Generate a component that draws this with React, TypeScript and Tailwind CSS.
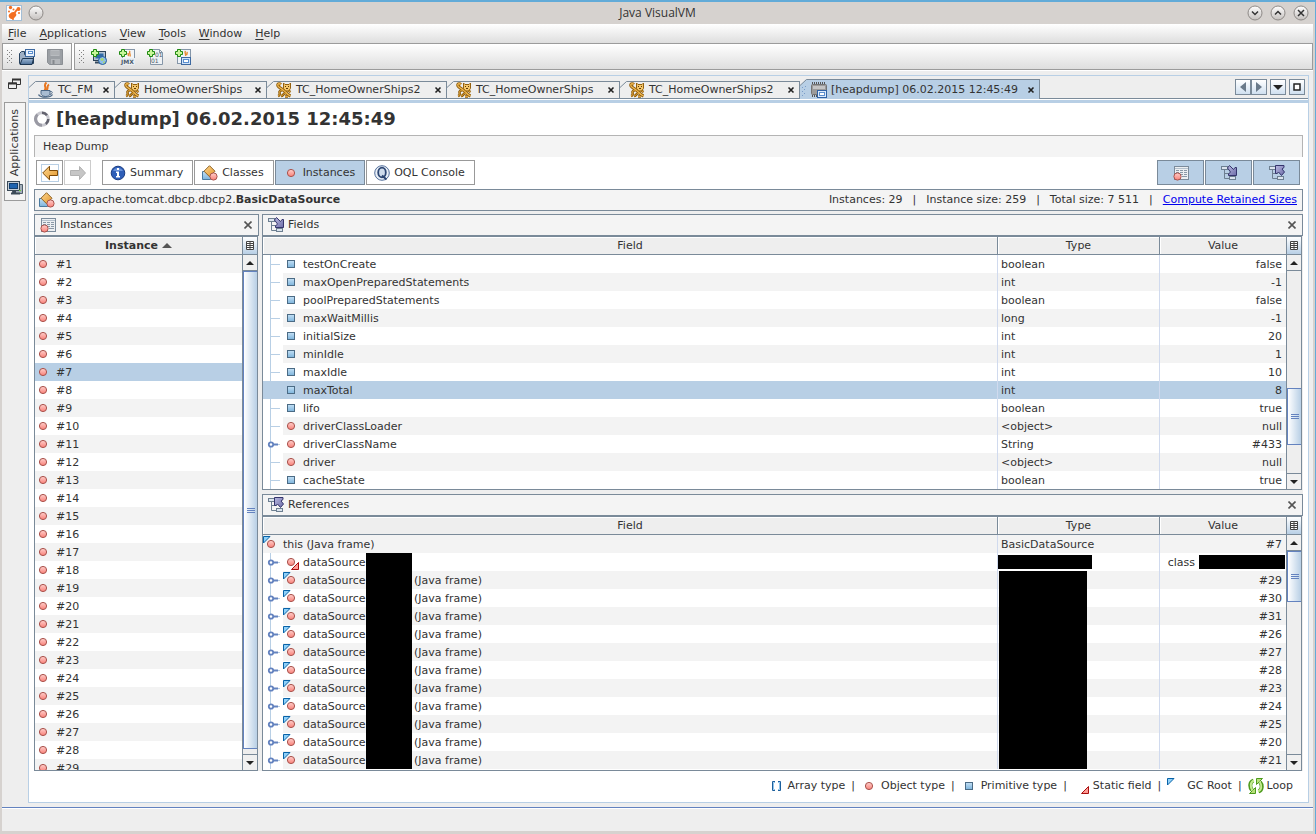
import type { ReactNode } from 'react';
import { useState } from 'react';
import { clsx } from 'clsx';

type NodeKind = 'primitive' | 'object' | 'static' | 'root';

interface FieldRow {
  name: string;
  type: string;
  value: string;
  kind: NodeKind;
  expandable?: boolean;
}

const menus = ['File', 'Applications', 'View', 'Tools', 'Window', 'Help'];

const fields: FieldRow[] = [
  { name: 'testOnCreate', type: 'boolean', value: 'false', kind: 'primitive' },
  { name: 'maxOpenPreparedStatements', type: 'int', value: '-1', kind: 'primitive' },
  { name: 'poolPreparedStatements', type: 'boolean', value: 'false', kind: 'primitive' },
  { name: 'maxWaitMillis', type: 'long', value: '-1', kind: 'primitive' },
  { name: 'initialSize', type: 'int', value: '20', kind: 'primitive' },
  { name: 'minIdle', type: 'int', value: '1', kind: 'primitive' },
  { name: 'maxIdle', type: 'int', value: '10', kind: 'primitive' },
  { name: 'maxTotal', type: 'int', value: '8', kind: 'primitive' },
  { name: 'lifo', type: 'boolean', value: 'true', kind: 'primitive' },
  { name: 'driverClassLoader', type: '<object>', value: 'null', kind: 'object' },
  { name: 'driverClassName', type: 'String', value: '#433', kind: 'object', expandable: true },
  { name: 'driver', type: '<object>', value: 'null', kind: 'object' },
  { name: 'cacheState', type: 'boolean', value: 'true', kind: 'primitive' },
];

const frameRefs = ['#29', '#30', '#31', '#26', '#27', '#28', '#23', '#24', '#25', '#20', '#21'];
const instances = Array.from({ length: 29 }, (_, i) => `#${i + 1}`);

/* ---------- icons ---------- */

function Icon({ children }: { children: ReactNode }) {
  return (
    <svg width="16" height="16" viewBox="0 0 16 16" fill="none" className="shrink-0" aria-hidden="true">
      {children}
    </svg>
  );
}

function Gradients() {
  return (
    <svg width="0" height="0" className="absolute" aria-hidden="true">
      <defs>
        <linearGradient id="red" x1="0" y1="0" x2="0" y2="1">
          <stop offset="0" stopColor="#ffd0cc" />
          <stop offset="1" stopColor="#f98078" />
        </linearGradient>
        <linearGradient id="blue" x1="0" y1="0" x2="0" y2="1">
          <stop offset="0" stopColor="#c4e0f5" />
          <stop offset="1" stopColor="#7db4dc" />
        </linearGradient>
        <linearGradient id="gold" x1="0" y1="0" x2="1" y2="1">
          <stop offset="0" stopColor="#ffd890" />
          <stop offset="1" stopColor="#e0952c" />
        </linearGradient>
        <linearGradient id="knob" x1="0" y1="0" x2="0" y2="1">
          <stop offset="0" stopColor="#ffffff" />
          <stop offset="1" stopColor="#c4c0bd" />
        </linearGradient>
        <linearGradient id="navy" x1="0" y1="0" x2="1" y2="1">
          <stop offset="0" stopColor="#b9b9e0" />
          <stop offset="1" stopColor="#6c6ca8" />
        </linearGradient>
        <linearGradient id="steel" x1="0" y1="0" x2="0" y2="1">
          <stop offset="0" stopColor="#9db8d4" />
          <stop offset="1" stopColor="#4d6f98" />
        </linearGradient>
      </defs>
    </svg>
  );
}

function Dot({ cx = 8, cy = 8 }: { cx?: number; cy?: number }) {
  return <circle cx={cx} cy={cy} r="3.6" fill="url(#red)" stroke="#a8524c" />;
}

function RootMark() {
  return <path d="M.5.5H7L.5 7Z" fill="#8fd0f8" stroke="#0863a8" />;
}

function StaticMark() {
  return <path d="M15.5 8.5V15.5H8.5Z" fill="#ff9a94" stroke="#a80f0f" />;
}

function KindIcon({ kind }: { kind: NodeKind }) {
  return (
    <Icon>
      {kind === 'primitive' && <rect x="4.5" y="4.5" width="7" height="7" fill="url(#blue)" stroke="#4b6b85" />}
      {kind !== 'primitive' && <Dot />}
      {kind === 'root' && <RootMark />}
      {kind === 'static' && <StaticMark />}
    </Icon>
  );
}

function Plus() {
  return <path d="M2.5.5h3v2h2v3h-2v2h-3v-2h-2v-3h2Z" fill="#c8f59a" stroke="#1f8a12" />;
}

function AppIcon() {
  return (
    <Icon>
      <rect x=".5" y=".5" width="15" height="15" fill="#fff" stroke="#a3bed6" />
      <path d="M3.500 9c2-1.500 3-2.500 5-1.500 2 1 2.500 2.500 1 4s-2 3-4 2.500-4-3-2-5Z" fill="#f36f21" />
      <path d="M8.500 8 11 4.500" stroke="#f36f21" strokeWidth="2" />
      <circle cx="12.500" cy="4" r="2" fill="#f36f21" />
      <circle cx="4.500" cy="2.500" r="1.700" fill="#f36f21" />
      <circle cx="7.500" cy="4.500" r="1" fill="#f36f21" />
      <circle cx="3" cy="6.500" r="1" fill="#f36f21" />
      <circle cx="13" cy="8" r="1" fill="#f36f21" />
      <circle cx="7" cy="14" r="1" fill="#f36f21" />
    </Icon>
  );
}

function OpenIcon() {
  return (
    <Icon>
      <path d="M.500 14.500V4.500l2-2h3v3h9v9Z" fill="#9fb0c4" stroke="#27425f" />
      <rect x="6.500" y=".500" width="9" height="7" fill="#e8f0fa" stroke="#3e69a0" />
      <rect x="9.500" y="2.500" width="4" height="2" fill="#fff" stroke="#5a8fd0" />
      <path d="M1 15.500 3.500 9.500h11l-1.500 6Z" fill="url(#steel)" stroke="#1d3652" />
    </Icon>
  );
}

function SaveIcon() {
  return (
    <Icon>
      <path d="M.500.500h15v15h-13l-2-2Z" fill="#9b9fa4" stroke="#8b8f94" />
      <rect x="3.500" y="1" width="9" height="6" fill="#b9bcc0" />
      <path d="M4 3h8M4 5h8" stroke="#a3a6aa" />
      <rect x="4" y="10" width="9" height="5" fill="#b4b7bb" />
      <rect x="5.500" y="11" width="2" height="4" fill="#85898e" />
    </Icon>
  );
}

function HostIcon() {
  return (
    <Icon>
      <rect x="2.500" y="2.500" width="12" height="9" fill="#b4c4d4" stroke="#2d4358" />
      <rect x="4.500" y="4.500" width="8" height="5" fill="#2f6aa8" />
      <path d="M4 13.500h6" stroke="#34495e" strokeWidth="2" />
      <circle cx="11.500" cy="11.500" r="4" fill="#8cbcec" stroke="#235a94" />
      <path d="M9.500 9.500l2.500-.5 1 2-2 1-1.500-1ZM12 13l2-1-.5 2-1.500.5Z" fill="#a9d86a" />
      <Plus />
    </Icon>
  );
}

function JmxIcon() {
  return (
    <Icon>
      <rect x="3.500" y=".500" width="12" height="15" fill="#f3f5f8" stroke="#8596a8" />
      <path d="M11 2c-1.500 2 1 3 0 5.500M9 4c0 1 1 2 0 3" stroke="#e78a33" strokeWidth="1.400" />
      <rect x="2" y="9" width="14" height="7" fill="#e9edf2" />
      <text x="2" y="15" fontSize="6" fontWeight="bold" fontFamily="DejaVu Sans" fill="#4a5a6c">JMX</text>
      <Plus />
    </Icon>
  );
}

function CoreDumpIcon() {
  return (
    <Icon>
      <path d="M3.500.500h9l3 3v12h-12Z" fill="#eef1f4" stroke="#8596a8" />
      <path d="M12.500.500v3h3" stroke="#8596a8" />
      <text x="8" y="8" fontSize="6" fontFamily="DejaVu Sans" fill="#4a5a6c">01</text>
      <text x="4" y="14" fontSize="6" fontFamily="DejaVu Sans" fill="#4a5a6c">01</text>
      <Plus />
    </Icon>
  );
}

function SnapshotIcon() {
  return (
    <Icon>
      <rect x="2.500" y=".500" width="13" height="14" fill="#eef3f9" stroke="#8596a8" />
      <path d="M10.500 2c-1.500 2 1 3 0 5M12.500 3c-1 1 0 2-1 3" stroke="#e78a33" strokeWidth="1.400" />
      <rect x="6.500" y="8.500" width="9" height="7" fill="#cfe2f8" stroke="#3e69a0" />
      <rect x="8.500" y="10.500" width="5" height="3" fill="#fff" stroke="#5a8fd0" />
      <Plus />
    </Icon>
  );
}

function JavaIcon() {
  return (
    <Icon>
      <path d="M8.500.5C4.500 4 9.500 5 6.500 8.500M11 2.500C8 4.500 11 6 8.500 8.500" stroke="#e8761f" strokeWidth="2" />
      <path d="M3 8.500h9v3c0 2-2 3-4.500 3S3 13 3 11.500Z" fill="#a9bdd2" stroke="#4b6785" />
      <path d="M12 9.500c3-.5 3 2 0 3" stroke="#4b6785" />
      <path d="M.5 12.500c2 3.500 12 3.500 14 0" stroke="#4b6785" strokeWidth="1.400" />
    </Icon>
  );
}

function TomcatIcon() {
  const tail = 'M5 2.500C3 1 1 2 2 4s5 3 7 5.500 3 3.500 5.500 4.500';
  const legs = 'M2 14c2-.5 2-2 1.500-3.500S5 8 6.500 8.500M5 14c2.500 0 2-3 5-3M12 8.500l2.500 1.500M9 14.500h3';
  return (
    <Icon>
      <path d={tail} stroke="#8f5d0c" strokeWidth="3" />
      <path d={legs} stroke="#8f5d0c" strokeWidth="2.600" />
      <path d={tail} stroke="#f0b850" strokeWidth="1.300" />
      <path d={legs} stroke="#e0a43a" strokeWidth="1" />
      <path d="M7.500 1l1.500 1.500h4L14.500 1v5.500l-2 2.500h-3l-2-2.500Z" fill="#f4c66a" stroke="#94600c" />
      <path d="M9 4.500h1M12 4.500h1M10 6.500h2" stroke="#5e3b05" />
    </Icon>
  );
}

function HeapIcon() {
  return (
    <Icon>
      <path d="M1 1h14M1 14h6" stroke="#555" strokeWidth="2" strokeDasharray="1 1" />
      <rect x=".500" y="2.500" width="15" height="10" rx="1" fill="#9b9b9b" stroke="#747474" />
      <path d="M2 5.500h12" stroke="#c4c4c4" strokeWidth="3" />
      <rect x="6.500" y="8.500" width="9" height="7" fill="#dceafa" stroke="#2f62a5" />
      <rect x="8.500" y="10.500" width="5" height="3" fill="#fff" stroke="#5a8fd0" />
    </Icon>
  );
}

function SpinnerIcon() {
  return (
    <Icon>
      <circle cx="8" cy="8" r="6.300" stroke="#c9c9d0" strokeWidth="3" />
      <path d="M3.500 3.500A6.300 6.300 0 0 0 8 14.300" stroke="#9a9aa4" strokeWidth="3" />
      <path d="M8 1.700a6.300 6.300 0 0 1 5 2.500M14.300 8a6.300 6.300 0 0 1-2.500 5" stroke="#62626e" strokeWidth="2.500" />
    </Icon>
  );
}

function ArrowIcon({ forward }: { forward?: boolean }) {
  return forward ? (
    <Icon>
      <path d="M15.500 8 9.500 1.500V5.500H.500v5h9v4Z" fill="#c6c6c6" stroke="#b2b2b2" />
    </Icon>
  ) : (
    <Icon>
      <path d="M.700 8 7.500 1.200V5.500h8v5h-8v4.300Z" fill="url(#gold)" stroke="#7d4a08" />
    </Icon>
  );
}

function InfoIcon() {
  return (
    <Icon>
      <circle cx="8" cy="8" r="6.800" fill="#2f5fb8" stroke="#1b3d82" />
      <path d="M3 6a5.500 5 0 0 1 10 0Z" fill="#6c94da" />
      <path d="M7 3h2v2H7ZM6 6.500h3V11h1v1.500H6V11h1V8H6Z" fill="#fff" />
    </Icon>
  );
}

function ClassesIcon() {
  return (
    <Icon>
      <path d="M.500 6.500h8v8h-8Z" fill="url(#blue)" stroke="#4b7ba0" />
      <path d="M7.500.700 13 6.200l-5.500 5.500L2 6.200Z" fill="url(#gold)" stroke="#8f6426" />
      <Dot cx={11.5} cy={11.5} />
    </Icon>
  );
}

function OqlIcon() {
  return (
    <Icon>
      <circle cx="8" cy="8" r="7.300" fill="#eaf0f8" stroke="#54709c" />
      <ellipse cx="8" cy="7.500" rx="3.800" ry="4.800" fill="#cfdcec" stroke="#2c4673" strokeWidth="1.800" />
      <path d="M8 10.500l4.500 4" stroke="#2c4673" strokeWidth="2" />
    </Icon>
  );
}

function InstancesIcon() {
  return (
    <Icon>
      <rect x="1.500" y="1.500" width="14" height="13" fill="#eceff2" stroke="#7b8b9b" />
      <path d="M2 3.500h13" stroke="#b4c0cc" />
      <path d="M3 5.500h3M7 5.500h3M11 5.500h3M3 7.500h3M7 7.500h3M11 7.500h3M6 9.500h4M11 9.500h3M9 11.500h5" stroke="#8a98a6" />
      <Dot cx={4.5} cy={11.5} />
    </Icon>
  );
}

function TreeIcon({ up }: { up?: boolean }) {
  return (
    <Icon>
      <path d="M3.500 4v9.500H9M4 8.500h5" stroke="#6d7f91" />
      <rect x=".500" y="1.500" width="6" height="3" fill="#dbe4ee" stroke="#6d7f91" />
      <rect x="8.500" y="11.500" width="6" height="3" fill="#dbe4ee" stroke="#6d7f91" />
      {up ? (
        <path d="M6.500.500H15V2.500L13 4l2.500 3-3 3.500L9.500 7 8 8.500H6.500Z" fill="url(#navy)" stroke="#34346c" />
      ) : (
        <path d="M6.500 3 8.500.500l4 4L14 2.500h1.500v8H7.500V9L9.500 7Z" fill="url(#navy)" stroke="#34346c" />
      )}
    </Icon>
  );
}

function ComputerIcon() {
  return (
    <Icon>
      <path d="M5.500 4.500h10v9h-10Z" fill="#a4b0bb" stroke="#4f5d6a" />
      <rect x=".500" y="1.500" width="12" height="9" fill="#c4ced8" stroke="#3c4a57" />
      <rect x="2.500" y="3.500" width="8" height="5" fill="#2064b0" stroke="#143f70" />
      <path d="M4 13.500h9M6 11.500h3" stroke="#3c4a57" strokeWidth="2" />
      <path d="M12 10.500h2" stroke="#6fd03a" />
    </Icon>
  );
}

function LoopIcon() {
  return (
    <Icon>
      <path d="M5.500 2.500C1.500 4 1.500 9 4 12M10.500 13.500c4-1.500 4-6.500 1.500-9.500" stroke="#4c9a1c" strokeWidth="4" />
      <path d="M7.500 9.500v6h-6ZM8.500 6.500v-6h6Z" fill="#b7e07a" stroke="#4c9a1c" />
      <path d="M6 2.500C2 4 2 9 4.500 12.500M10 13.500c4-1.500 4-6.500 1.500-10" stroke="#c4ea90" strokeWidth="2" />
    </Icon>
  );
}

function ArrayIcon() {
  return (
    <Icon>
      <path d="M7 3.500H4.500v9H7M10 3.500h2.500v9H10" stroke="#1c5f9c" strokeWidth="1" />
      <path d="M7 4.500H5.500v7H7M10 4.500h1.500v7H10" stroke="#8fc4ec" />
    </Icon>
  );
}

function CloseGlyph({ bold }: { bold?: boolean }) {
  return (
    <svg width="8" height="8" viewBox="0 0 8 8" aria-hidden="true">
      <path
        d={bold ? 'M1.500 1.500l5 5M6.500 1.500l-5 5' : 'M.500.500l7 7M7.500.500l-7 7'}
        stroke={bold ? '#222' : '#555'}
        strokeWidth={1.6}
      />
    </svg>
  );
}

function Grip() {
  return (
    <svg width="6" height="14" className="shrink-0" shapeRendering="crispEdges" aria-hidden="true">
      <path d="M0 .5h1M4 .5h1M2 2.500h1M0 4.500h1M4 4.500h1M2 6.500h1M0 8.500h1M4 8.500h1M2 10.500h1M0 12.500h1M4 12.500h1" stroke="#808080" />
    </svg>
  );
}

/* ---------- window chrome ---------- */

function Knob({ label, d }: { label: string; d: string }) {
  return (
    <button aria-label={label}>
      <Icon>
        <circle cx="8" cy="8" r="7" fill="url(#knob)" stroke="#8e8a87" />
        <path d={d} stroke="#333" strokeWidth="1.500" />
      </Icon>
    </button>
  );
}

function TitleBar() {
  return (
    <header className="flex h-[22px] shrink-0 items-center bg-[#d6d2cf] px-1">
      <div className="flex flex-1 items-center gap-1.5">
        <AppIcon />
        <Knob label="Pin" d="M7.500 8h1" />
      </div>
      <h1 className="font-['Open_Sans','Noto_Sans',sans-serif] text-[12px] leading-4">Java VisualVM</h1>
      <div className="flex flex-1 items-center justify-end gap-[7px]">
        <Knob label="Minimize" d="M5 6.500l3 3 3-3" />
        <Knob label="Maximize" d="M5 9.500l3-3 3 3" />
        <Knob label="Close window" d="M5 5l6 6M11 5l-6 6" />
      </div>
    </header>
  );
}

function MenuBar() {
  return (
    <nav className="flex h-[19px] shrink-0 items-center gap-[13px] bg-linear-to-b from-white to-[#dedede] px-1.5">
      {menus.map(m => (
        <button key={m}>
          <span className="underline underline-offset-2">{m[0]}</span>
          {m.slice(1)}
        </button>
      ))}
    </nav>
  );
}

function Toolbar() {
  const bar = 'flex h-[27px] items-center border border-[#9b9b9b] bg-linear-to-b from-white to-[#dedede]';
  return (
    <div className="flex shrink-0 gap-0.5 bg-white pb-px">
      <div className={clsx(bar, 'gap-3 pl-1 pr-2')}>
        <Grip />
        <button aria-label="Load" className="-ml-1.5"><OpenIcon /></button>
        <button aria-label="Save" disabled><SaveIcon /></button>
      </div>
      <div className={clsx(bar, 'flex-1 gap-3 pl-1')}>
        <Grip />
        <button aria-label="Add remote host" className="-ml-1.5"><HostIcon /></button>
        <button aria-label="Add JMX connection"><JmxIcon /></button>
        <button aria-label="Add core dump"><CoreDumpIcon /></button>
        <button aria-label="Add snapshot"><SnapshotIcon /></button>
      </div>
    </div>
  );
}

function SideBar() {
  return (
    <aside className="flex w-[26px] shrink-0 flex-col items-center pt-[3px]">
      <button aria-label="Restore group" className="mb-3">
        <svg width="14" height="12" viewBox="0 0 14 12" fill="none" aria-hidden="true">
          <path d="M4.500 1v5.500h8V1" stroke="#333" />
          <path d="M4 1.500h9" stroke="#333" strokeWidth="2" />
          <path d="M.500 5v5.500h8V5Z" fill="#eee" stroke="#333" />
          <path d="M0 5.500h9" stroke="#333" strokeWidth="2" />
        </svg>
      </button>
      <button className="flex w-[22px] flex-col items-center gap-1 border border-[#9b9b9b] bg-[#f4f4f4] pt-1.5 pb-1">
        <span className="rotate-180 [writing-mode:vertical-rl]">Applications</span>
        <ComputerIcon />
      </button>
    </aside>
  );
}

/* ---------- document tabs ---------- */

interface TabProps {
  icon: ReactNode;
  title: string;
  width: string;
  active?: boolean;
}

function Tab({ icon, title, width, active }: TabProps) {
  return (
    <div className={clsx('flex shrink-0', width, active ? 'h-[20px]' : 'h-[18px]')}>
      <svg width="7" height="20" className="h-full shrink-0" aria-hidden="true">
        <path d="M0 6.500 6.500 0H7V20H0Z" fill={active ? '#b8cfe5' : '#eee'} />
        <path d="M0 6.500 6.500.5H7" fill="none" stroke="#7a8a99" />
        {!active && <path d="M0 17.500h7" stroke="#7a8a99" />}
        {active && <path d="M2.500 8v1M4.500 10v1M2.500 12v1M4.500 14v1M2.500 16v1M5.500 7v1" stroke="#7a9cc8" />}
      </svg>
      <div
        className={clsx(
          'flex min-w-0 flex-1 items-center gap-1 border-t border-r border-[#7a8a99] pr-1',
          active ? 'bg-[#b8cfe5] pl-1' : 'border-b bg-[#eee] pl-0.5',
        )}
      >
        {icon}
        <button role="tab" aria-selected={!!active} className="whitespace-nowrap">{title}</button>
        <button aria-label={`Close ${title}`} className="ml-auto"><CloseGlyph bold /></button>
      </div>
    </div>
  );
}

function TabButton({ label, children }: { label: string; children: ReactNode }) {
  return (
    <button aria-label={label} className="flex size-4 items-center justify-center border border-[#7a8a99] bg-linear-to-b from-white to-[#d0e0f0]">
      {children}
    </button>
  );
}

function TabStrip() {
  return (
    <div className="shrink-0">
      <div className="relative z-10 flex h-[23px] items-end" role="tablist">
        <Tab icon={<JavaIcon />} title="TC_FM" width="w-[86px]" />
        <Tab icon={<TomcatIcon />} title="HomeOwnerShips" width="w-[152px]" />
        <Tab icon={<TomcatIcon />} title="TC_HomeOwnerShips2" width="w-[180px]" />
        <Tab icon={<TomcatIcon />} title="TC_HomeOwnerShips" width="w-[173px]" />
        <Tab icon={<TomcatIcon />} title="TC_HomeOwnerShips2" width="w-[180px]" />
        <Tab icon={<HeapIcon />} title="[heapdump] 06.02.2015 12:45:49" width="w-[240px]" active />
        <div className="flex h-full min-w-0 flex-1 items-start justify-end gap-[3px] border-b border-[#7a8a99] pt-[3px] pr-[3px]">
          <div className="flex">
            <TabButton label="Scroll left">
              <svg width="6" height="10"><path d="M6 0v10L0 5Z" fill="#6a7a8a" /></svg>
            </TabButton>
            <TabButton label="Scroll right">
              <svg width="6" height="10"><path d="M0 0v10l6-5Z" fill="#6a7a8a" /></svg>
            </TabButton>
          </div>
          <TabButton label="Show documents">
            <svg width="10" height="5"><path d="M0 0h10L5 5Z" fill="#222" /></svg>
          </TabButton>
          <TabButton label="Maximize document">
            <svg width="8" height="8"><rect x="1" y="1" width="6" height="6" fill="#fff" stroke="#222" strokeWidth="1.500" /></svg>
          </TabButton>
        </div>
      </div>
      <div className="h-1 border-t border-white bg-[#b8cfe5]" />
    </div>
  );
}

/* ---------- heap dump view ---------- */

interface ViewButtonProps {
  icon: ReactNode;
  label: string;
  active?: boolean;
  onClick: () => void;
}

function ViewButton({ icon, label, active, onClick }: ViewButtonProps) {
  return (
    <button
      onClick={onClick}
      className={clsx(
        'flex h-[25px] items-center gap-1 border pr-[9px] pl-[7px]',
        active ? 'border-[#7a8a99] bg-[#b8cfe5]' : 'border-[#999] bg-white',
      )}
    >
      {icon}
      {label}
    </button>
  );
}

function ViewBar() {
  const [view, setView] = useState('Instances');
  const views = [
    { label: 'Summary', icon: <InfoIcon /> },
    { label: 'Classes', icon: <ClassesIcon /> },
    { label: 'Instances', icon: <KindIcon kind="object" /> },
    { label: 'OQL Console', icon: <OqlIcon /> },
  ];
  const toggle = 'flex h-[25px] w-[47px] items-center justify-center border border-[#7a8a99] bg-[#b8cfe5]';
  return (
    <div className="flex shrink-0 items-center gap-px pt-[3px] pr-[3px] pb-1 pl-0.5">
      <button aria-label="Back" className="flex h-[25px] w-[27px] items-center justify-center border border-[#999]">
        <span className="border border-[#b8cfe5]"><ArrowIcon /></span>
      </button>
      <button aria-label="Forward" disabled className="mr-2.5 flex h-[25px] w-[27px] items-center justify-center border border-[#ccc]">
        <ArrowIcon forward />
      </button>
      {views.map(v => (
        <ViewButton key={v.label} icon={v.icon} label={v.label} active={view === v.label} onClick={() => setView(v.label)} />
      ))}
      <div className="ml-auto flex gap-px">
        <button aria-label="Show instances" className={toggle}><InstancesIcon /></button>
        <button aria-label="Show fields" className={toggle}><TreeIcon /></button>
        <button aria-label="Show references" className={toggle}><TreeIcon up /></button>
      </div>
    </div>
  );
}

function ClassBar() {
  return (
    <div className="flex h-[22px] shrink-0 items-center gap-[5px] border border-[#7a8a99] bg-[#f4f4f4] pr-[5px] pl-1">
      <ClassesIcon />
      <span>org.apache.tomcat.dbcp.dbcp2.<b>BasicDataSource</b></span>
      <div className="ml-auto flex gap-2.5">
        <span>Instances: 29</span>
        <span>|</span>
        <span>Instance size: 259</span>
        <span>|</span>
        <span>Total size: 7 511</span>
        <span>|</span>
        <a href="#retained" className="text-[#0000ee] underline">Compute Retained Sizes</a>
      </div>
    </div>
  );
}

function ScrollBar({ start, size }: { start: number; size: number }) {
  const cap = 'flex h-4 shrink-0 items-center justify-center bg-[#f0f0f0]';
  return (
    <div className="flex w-4 shrink-0 flex-col border-x border-[#7a8a99] bg-[#eee]">
      <button aria-label="Choose columns" className="flex h-[18px] shrink-0 items-center justify-center border-b border-[#7a8a99] bg-linear-to-b from-white to-[#b8cfe5]">
        <svg width="8" height="9" viewBox="0 0 8 9" aria-hidden="true">
          <path d="M.500.500h7v8h-7ZM4 0v9M0 2.500h8M0 4.500h8M0 6.500h8" fill="#fff" stroke="#444" />
        </svg>
      </button>
      <button aria-label="Scroll up" className={clsx(cap, 'border-b border-[#7a8a99]')}>
        <svg width="8" height="4"><path d="M0 4h8L4 0Z" fill="#222" /></svg>
      </button>
      <div className="min-h-0 flex-1">
        <div style={{ height: `${start}%` }} />
        <div
          className="flex flex-col items-center justify-center gap-px border-y border-l border-[#6382bf] bg-linear-to-r from-white to-[#b8cfe5]"
          style={{ height: `${size}%` }}
        >
          <div className="h-px w-2 bg-[#6382bf]" />
          <div className="h-px w-2 bg-[#6382bf]" />
          <div className="h-px w-2 bg-[#6382bf]" />
        </div>
      </div>
      <button aria-label="Scroll down" className={clsx(cap, 'border-t border-[#7a8a99]')}>
        <svg width="8" height="4"><path d="M0 0h8L4 4Z" fill="#222" /></svg>
      </button>
    </div>
  );
}

interface PanelProps {
  title: string;
  icon: ReactNode;
  scroll: { start: number; size: number };
  className: string;
  children: ReactNode;
}

function Panel({ title, icon, scroll, className, children }: PanelProps) {
  return (
    <section className={clsx('flex min-h-0 flex-col', className)}>
      <div className="flex h-[22px] shrink-0 items-center gap-1 border border-[#7a8a99] bg-[#f4f4f4] pr-1.5 pl-[5px]">
        {icon}
        <h3>{title}</h3>
        <button aria-label={`Close ${title}`} className="ml-auto"><CloseGlyph /></button>
      </div>
      <div className="mr-px flex min-h-0 flex-1 border-y border-l border-[#7a8a99] bg-white">
        <div className="min-w-0 flex-1 overflow-hidden">{children}</div>
        <ScrollBar start={scroll.start} size={scroll.size} />
      </div>
    </section>
  );
}

const th = 'h-[18px] border-b border-[#7a8a99] bg-[#eee] p-0 font-normal leading-4 shadow-[inset_1px_1px_0_#fff]';

function InstanceTable() {
  const [selected, setSelected] = useState('#7');
  return (
    <table className="w-full table-fixed border-separate border-spacing-0">
      <thead>
        <tr>
          <th className={th}>
            <span className="inline-flex items-center gap-1 font-bold">
              Instance
              <svg width="10" height="5"><path d="M0 5h10L5 0Z" fill="#555" /></svg>
            </span>
          </th>
        </tr>
      </thead>
      <tbody>
        {instances.map((id, i) => (
          <tr
            key={id}
            onClick={() => setSelected(id)}
            className={selected === id ? 'bg-[#b8cfe5]' : i % 2 === 0 ? 'bg-[#f3f3f3]' : 'bg-white'}
          >
            <td className="h-[18px] p-0">
              <div className="flex h-[18px] items-center gap-[5px]">
                <KindIcon kind="object" />
                <span className="pt-px leading-[17px]">{id}</span>
              </div>
            </td>
          </tr>
        ))}
      </tbody>
    </table>
  );
}

function TreeGuide({ expandable, plain }: { expandable?: boolean; plain: boolean }) {
  return (
    <svg width="20" height="18" className={clsx('shrink-0', plain && 'bg-white')} aria-hidden="true">
      <path d="M7.500 0v18M8 9.500h9" stroke="#b8cfe5" />
      {expandable && (
        <>
          <path d="M10 9.500h5" stroke="#6382bf" strokeWidth="2" />
          <circle cx="8" cy="9.500" r="2.200" fill="#fff" stroke="#6382bf" strokeWidth="1.800" />
        </>
      )}
    </svg>
  );
}

function TreeTable({ children }: { children: ReactNode }) {
  return (
    <table className="w-full table-fixed border-separate border-spacing-0">
      <colgroup>
        <col />
        <col className="w-[162px]" />
        <col className="w-[126px]" />
      </colgroup>
      <thead>
        <tr>
          <th className={clsx(th, 'border-r')}>Field</th>
          <th className={clsx(th, 'border-r')}>Type</th>
          <th className={th}>Value</th>
        </tr>
      </thead>
      <tbody>{children}</tbody>
    </table>
  );
}

interface TreeRowProps {
  kind: NodeKind;
  label: ReactNode;
  type: ReactNode;
  value: ReactNode;
  striped: boolean;
  selected?: boolean;
  expandable?: boolean;
  top?: boolean;
  onClick?: () => void;
}

function TreeRow({ kind, label, type, value, striped, selected, expandable, top, onClick }: TreeRowProps) {
  return (
    <tr onClick={onClick} className={selected ? 'bg-[#b8cfe5]' : striped ? 'bg-[#f3f3f3]' : 'bg-white'}>
      <td className="h-[18px] border-r border-[#d0daee] p-0">
        <div className="flex h-[18px] items-center overflow-hidden whitespace-nowrap">
          {!top && <TreeGuide expandable={expandable} plain={!selected} />}
          <KindIcon kind={kind} />
          <div className="flex items-center pl-1">{label}</div>
        </div>
      </td>
      <td className="h-[18px] border-r border-[#d0daee] p-0">{type}</td>
      <td className="h-[18px] p-0">{value}</td>
    </tr>
  );
}

function NameText({ children }: { children: ReactNode }) {
  return <span className="pt-px leading-[17px]">{children}</span>;
}

function TypeText({ children }: { children: ReactNode }) {
  return <div className="pt-px pl-[3px] leading-[17px]">{children}</div>;
}

function ValueText({ children }: { children: ReactNode }) {
  return <div className="pt-px pr-1 text-right leading-[17px]">{children}</div>;
}

function FieldsTable() {
  const [selected, setSelected] = useState('maxTotal');
  return (
    <TreeTable>
      {fields.map((f, i) => (
        <TreeRow
          key={f.name}
          kind={f.kind}
          label={<NameText>{f.name}</NameText>}
          type={<TypeText>{f.type}</TypeText>}
          value={<ValueText>{f.value}</ValueText>}
          striped={i % 2 === 1}
          selected={selected === f.name}
          expandable={f.expandable}
          onClick={() => setSelected(f.name)}
        />
      ))}
    </TreeTable>
  );
}

function MaskedName({ suffix }: { suffix?: string }) {
  return (
    <>
      <span className="w-[63px] pt-px leading-[17px]">dataSource</span>
      <span className="h-[18px] w-[46px] bg-black" />
      {suffix && <span className="pt-px pl-0.5 leading-[17px]">{suffix}</span>}
    </>
  );
}

function ReferencesTable() {
  return (
    <TreeTable>
      <TreeRow
        kind="root"
        label={<NameText>this (Java frame)</NameText>}
        type={<TypeText>BasicDataSource</TypeText>}
        value={<ValueText>#7</ValueText>}
        striped
        top
      />
      <TreeRow
        kind="static"
        label={<MaskedName />}
        type={<div className="h-3.5 w-[94px] bg-black" />}
        value={
          <div className="flex items-center justify-end gap-1 pr-px">
            <NameText>class</NameText>
            <span className="h-3.5 w-[86px] bg-black" />
          </div>
        }
        striped={false}
        expandable
      />
      {frameRefs.map((ref, i) => (
        <TreeRow
          key={ref}
          kind="root"
          label={<MaskedName suffix="(Java frame)" />}
          type={<div className="ml-px h-[18px] w-[88px] bg-black" />}
          value={<ValueText>{ref}</ValueText>}
          striped={i % 2 === 0}
          expandable
        />
      ))}
    </TreeTable>
  );
}

function Legend() {
  return (
    <footer className="flex h-[31px] shrink-0 items-center justify-end pr-2.5 pb-0.5">
      <ArrayIcon />
      <span className="pl-1">Array type</span>
      <span className="px-1.5">|</span>
      <KindIcon kind="object" />
      <span className="pl-1">Object type</span>
      <span className="px-1.5">|</span>
      <KindIcon kind="primitive" />
      <span className="pl-1">Primitive type</span>
      <span className="px-1.5">|</span>
      <Icon><StaticMark /></Icon>
      <span className="pl-1">Static field</span>
      <span className="px-1.5">|</span>
      <Icon><RootMark /></Icon>
      <span className="pl-1">GC Root</span>
      <span className="px-1.5">|</span>
      <LoopIcon />
      <span className="pl-[3px]">Loop</span>
    </footer>
  );
}

export default function App() {
  return (
    <div className="flex h-screen flex-col border-t-2 border-r border-[#62abd8] font-['DejaVu_Sans',sans-serif] text-[11px] leading-[14px] text-[#333]">
      <Gradients />
      <div className="flex min-h-0 flex-1 flex-col border-r-2 border-b-[3px] border-l-2 border-[#d6d2cf] bg-[#eee]">
        <TitleBar />
        <MenuBar />
        <Toolbar />

        <div className="flex min-h-0 flex-1 pt-1 pr-1 pb-1">
          <SideBar />
          <main className="flex min-w-0 flex-1 flex-col border border-[#b8cfe5] bg-[#eee]">
            <TabStrip />
            <div className="flex min-h-0 flex-1 flex-col bg-white px-[5px]">
              <div className="flex h-8 shrink-0 items-center gap-1.5">
                <SpinnerIcon />
                <h2 className="text-[18px] font-bold">[heapdump] 06.02.2015 12:45:49</h2>
              </div>
              <div className="flex h-[22px] shrink-0 items-center border border-b-0 border-[#b4b4b4] bg-[#f4f4f4] px-2">Heap Dump</div>
              <ViewBar />
              <ClassBar />

              <div className="flex min-h-0 flex-1 gap-[3px] bg-[#eee] pt-[3px]">
                <Panel title="Instances" icon={<InstancesIcon />} scroll={{ start: 0, size: 99 }} className="w-[225px] shrink-0">
                  <InstanceTable />
                </Panel>
                <div className="flex min-w-0 flex-1 flex-col gap-1">
                  <Panel title="Fields" icon={<TreeIcon />} scroll={{ start: 58, size: 28 }} className="flex-[276]">
                    <FieldsTable />
                  </Panel>
                  <Panel title="References" icon={<TreeIcon up />} scroll={{ start: 0, size: 25 }} className="flex-[277]">
                    <ReferencesTable />
                  </Panel>
                </div>
              </div>
              <Legend />
            </div>
          </main>
        </div>

        <div className="h-6 shrink-0 border-t border-[#6382bf] shadow-[inset_0_1px_0_#fff]" />
      </div>
    </div>
  );
}
